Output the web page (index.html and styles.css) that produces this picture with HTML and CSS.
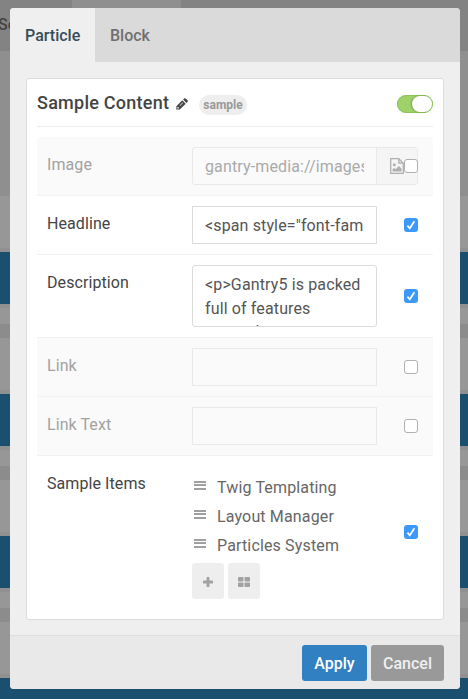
FILE: index.html
```html
<!DOCTYPE html>
<html lang="en">
<head>
<meta charset="utf-8">
<title>Particle Settings</title>
<link rel="stylesheet" href="styles.css">
</head>
<body>
<div class="page">
  <div class="page-nav"><span class="page-nav-text">Se</span><div class="page-tab"></div></div>
  <div class="page-toolbar"></div>
  <div class="page-gap"></div>
  <div class="block"></div><div class="section"></div>
  <div class="block"></div><div class="section"></div>
  <div class="block"></div><div class="section"></div>
  <div class="block"></div>
</div>

<div class="modal">
  <div class="tabs">
    <div class="tab tab-active">Particle</div>
    <div class="tab">Block</div>
  </div>
  <div class="content">
    <div class="card">
      <div class="card-head">
        <span class="title">Sample Content</span>
        <svg class="pencil" width="12" height="12" viewBox="0 0 12 12"><path fill="#444" fill-rule="evenodd" d="M.4 11.6V8.2L6.300 2.300l3.400 3.400-5.900 5.900zM1.400 9.300v1.300h1.300l.5-.5-1.300-1.300zM3.600 7.600l.4.4 3-3-.4-.4zM7.100 1.500l1-1q.8-.7 1.600 0l1.800 1.800q.7.8 0 1.600l-1 1z"/></svg>
        <span class="badge">sample</span>
        <span class="toggle"><span class="knob"></span></span>
      </div>
      <div class="row off">
        <span class="label">Image</span>
        <div class="field media"><div class="media-text"><span>gantry-media://images/</span></div><div class="media-btn"><svg width="14" height="16" viewBox="0 0 14 16"><path fill="none" stroke="#b0b0b0" stroke-width="1.3" d="M.7.7h8.100l4.500 4.500v10.100H.7zM8.800.7v4.500h4.500"/><circle cx="4.300" cy="6.800" r="1.500" fill="#b0b0b0"/><path fill="#b0b0b0" d="M2.500 13.500v-2l1.700-1.700 1.400 1.400 3.200-3.200 2.800 2.800v2.700z"/></svg></div></div>
        <span class="check"></span>
      </div>
      <div class="row">
        <span class="label">Headline</span>
        <div class="field input"><span class="clip">&lt;span style="font-fam</span></div>
        <span class="check on"><svg width="14" height="14" viewBox="0 0 14 14"><path fill="none" stroke="#fff" stroke-width="1.7" d="M3.400 7.600l2.400 2.700 4.600-7"/></svg></span>
      </div>
      <div class="row">
        <span class="label">Description</span>
        <div class="field textarea">&lt;p&gt;Gantry5 is packed<br>full of features<span class="next-line">created</span></div>
        <span class="check on"><svg width="14" height="14" viewBox="0 0 14 14"><path fill="none" stroke="#fff" stroke-width="1.7" d="M3.400 7.600l2.400 2.700 4.600-7"/></svg></span>
      </div>
      <div class="row off">
        <span class="label">Link</span>
        <div class="field input"></div>
        <span class="check"></span>
      </div>
      <div class="row off">
        <span class="label">Link Text</span>
        <div class="field input"></div>
        <span class="check"></span>
      </div>
      <div class="row row-last">
        <span class="label">Sample Items</span>
        <div class="items">
          <div class="item"><i class="grip"></i><span>Twig Templating</span></div>
          <div class="item"><i class="grip"></i><span>Layout Manager</span></div>
          <div class="item"><i class="grip"></i><span>Particles System</span></div>
          <div class="item-actions">
            <span class="mini"><svg width="10" height="10" viewBox="0 0 10 10"><path fill="#a2a2a2" d="M3.600.6q0-.6.6-.6h1.600q.6 0 .6.6v3h3q.6 0 .6.6v1.600q0 .6-.6.6h-3v3q0 .6-.6.6H4.200q-.6 0-.6-.6v-3h-3Q0 6.400 0 5.800V4.200q0-.6.6-.6h3z"/></svg></span>
            <span class="mini"><svg width="12" height="10" viewBox="0 0 12 10"><g fill="#a2a2a2"><rect width="5.500" height="4.500" rx=".8"/><rect x="6.500" width="5.500" height="4.500" rx=".8"/><rect y="5.500" width="5.500" height="4.500" rx=".8"/><rect x="6.500" y="5.500" width="5.500" height="4.500" rx=".8"/></g></svg></span>
          </div>
        </div>
        <span class="check on"><svg width="14" height="14" viewBox="0 0 14 14"><path fill="none" stroke="#fff" stroke-width="1.7" d="M3.400 7.600l2.400 2.700 4.600-7"/></svg></span>
      </div>
    </div>
  </div>
  <div class="footer">
    <span class="btn apply">Apply</span>
    <span class="btn cancel">Cancel</span>
  </div>
</div>
</body>
</html>
```

FILE: styles.css
```css
* { box-sizing: border-box; }
body { margin: 0; width: 468px; height: 699px; overflow: hidden; font: 16px/24px Roboto, "Liberation Sans", sans-serif; color: #444; position: relative; }
.page { height: 699px; overflow: hidden; background: #979797; }
.page-nav { height: 51px; background: #838383; display: flex; }
.page-nav-text { width: 72px; padding-top: 13px; font-weight: 500; color: #444; margin-left: -2px; }
.page-tab { width: 109px; margin-left: 2px; background: #8f8f8f; }
.page-toolbar { height: 145px; background: #8f8f8f; }
.page-gap { height: 56px; border-bottom: 4px solid #909090; }
.block { height: 52px; background: #1b4f6f; }
.section { height: 90px; background: linear-gradient(#909090 4px, #979797 4px 20px, #8c8c8c 20px 34px, #979797 34px 86px, #909090 86px); }

.modal { position: absolute; left: 10px; top: 8px; width: 450px; height: 681px; border-radius: 4px; overflow: hidden; background: #efefef; display: flex; flex-direction: column; }
.tabs { height: 54px; background: #dadada; display: flex; }
.tab { padding: 16px 15px 14px; font-weight: 500; color: #6f6f6f; white-space: nowrap; }
.tab-active { width: 85px; background: #efefef; color: #354d59; }
.content { flex: 1; padding: 16px 16px 15px; }
.card { height: 542px; background: #fff; border: 1px solid #dcdcdc; border-radius: 3px; padding: 0 10px; }
.card-head { height: 48px; border-bottom: 1px solid #ededed; display: flex; align-items: center; margin-bottom: 10px; }
.title { font-size: 18px; font-weight: 500; letter-spacing: .25px; width: 139px; white-space: nowrap; }
.pencil { margin: 3px 11px 0 0; flex: none; }
.badge { height: 20px; width: 48px; border-radius: 10px; background: #eee; color: #999; font-size: 12px; font-weight: 700; line-height: 21px; text-align: center; margin-top: 5px; }
.toggle { margin: 2px 0 0 auto; width: 36px; height: 18px; border-radius: 9px; background: #9fd36a; box-shadow: inset 0 0 0 1px #8fc35c; display: flex; justify-content: flex-end; padding: 1px; }
.knob { width: 20px; height: 16px; border-radius: 8px; background: #fff; box-shadow: -1px 0 2px rgba(0,0,0,.25); }

.row { display: flex; padding: 10px; border-bottom: 1px solid #f2f2f2; position: relative; }
.row-last { border: 0; }
.off { background: #fafafa; color: #a2a2a2; }
.label { width: 145px; flex: none; padding-top: 6px; letter-spacing: .08px; white-space: nowrap; }
.field { width: 185px; height: 38px; border: 1px solid #dcdcdc; background: #fff; color: #555; letter-spacing: .13px; white-space: nowrap; overflow: hidden; }
.off .field { border-color: #e9e9e9; background: #fafafa; color: #aaa; }
.input { padding: 7px 10px 5px 12px; }
.clip { display: block; overflow: hidden; }
.media { width: 227px; border-radius: 3px; display: flex; }
.media-text { width: 183px; flex: none; padding: 7px 12px 5px; }
.media-text span { display: block; overflow: hidden; }
.media-btn { flex: 1; background: #f5f5f5; border-left: 1px solid #e9e9e9; padding: 10px 0 0 13px; line-height: 0; }
.off .media { width: 226px; }
.textarea { height: 62px; border-radius: 3px; padding: 7px 12px 0; }
.next-line { display: block; margin-top: -1px; }
.check { position: absolute; right: 15px; top: calc(50% - 7px); width: 14px; height: 14px; border: 1px solid #b0b0b0; border-radius: 3px; background: #fff; line-height: 0; }
.check.on { border: 0; background: #3b99fc; }
.row-last .check { top: calc(50% - 8px); }
.items { padding-top: 7px; color: #666; letter-spacing: .15px; }
.item { height: 29px; line-height: 29px; display: flex; white-space: nowrap; }
.grip { width: 12px; height: 9px; margin: 8px 11px 0 2px; border-top: 2px solid #a0a0a0; border-bottom: 2px solid #a0a0a0; background: linear-gradient(transparent 1.500px, #a0a0a0 1.500px 3.500px, transparent 3.500px); }
.item-actions { display: flex; gap: 4px; padding-top: 3px; }
.mini { width: 32px; height: 36px; border-radius: 3px; background: #eee; display: flex; align-items: center; justify-content: center; padding-top: 2px; }
.footer { height: 54px; background: #e9e9e9; border-top: 1px solid #dedede; display: flex; justify-content: flex-end; gap: 4px; padding: 9px 16px 0; }
.btn { height: 36px; border-radius: 3px; color: #fff; font-weight: 500; line-height: 38px; text-align: center; }
.apply { width: 65px; background: #3180c2; }
.cancel { width: 73px; background: #999; color: #f0f0f0; }
```
